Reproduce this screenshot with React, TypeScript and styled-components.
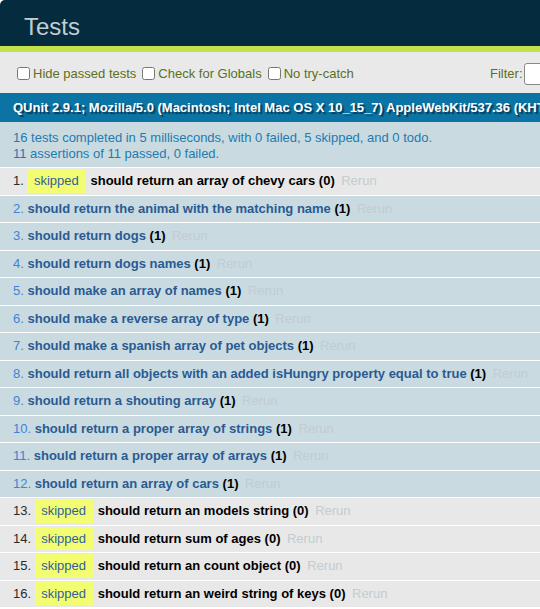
import styled, { createGlobalStyle } from "styled-components";

const GlobalStyle = createGlobalStyle`
  html, body {
    margin: 0;
    padding: 0;
    overflow: hidden;
    background: #ffffff;
  }
  body {
    font-family: "Liberation Sans", Arial, Helvetica, sans-serif;
  }
`;

const Page = styled.div`
  width: 800px;
`;

const Header = styled.h1`
  margin: 0;
  padding: 15px 0 7px 24px;
  color: #c2ccd1;
  background-color: #052c3e;
  font-size: 24px;
  line-height: 24px;
  font-weight: 400;
  border-radius: 5px 5px 0 0;
`;

const Banner = styled.div`
  height: 6px;
  background-color: #c3e14b;
`;

const Toolbar = styled.div`
  display: flex;
  align-items: center;
  box-sizing: border-box;
  height: 41px;
  padding: 7.5px 13px 5.5px;
  color: #5c7020;
  background-color: #e9e9e9;
  font-size: 13px;
`;

const Option = styled.label`
  display: inline-flex;
  align-items: center;
  margin-right: 2px;
  white-space: nowrap;
  input {
    margin: 3px 3px 3px 4px;
    width: 13px;
    height: 13px;
  }
`;

const FilterGroup = styled.div`
  display: flex;
  align-items: center;
  width: 297px;
  margin-left: auto;
  white-space: nowrap;
`;

const FilterInput = styled.input`
  box-sizing: border-box;
  width: 160px;
  height: 22px;
  margin-left: 1px;
  border: 1px solid #8a8a8a;
  border-radius: 3px;
  background: #ffffff;
`;

const UserAgent = styled.h2`
  margin: 0;
  padding: 6.5px 13px;
  background-color: #0b74a5;
  color: #ffffff;
  font-size: 13px;
  line-height: 16px;
  font-weight: 700;
  white-space: nowrap;
  text-shadow: rgba(0, 0, 0, 0.5) 2px 2px 1px;
`;

const TestResult = styled.p`
  margin: 0;
  padding: 8px 13px 5px;
  color: #1e7bb0;
  background-color: #c9dae1;
  border-bottom: 1px solid #ffffff;
  font-size: 13px;
  line-height: 16px;
  white-space: nowrap;
`;

const Tests = styled.ol`
  margin: 0;
  padding: 0;
  list-style-position: inside;
  font-size: 13px;
`;

const Test = styled.li<{ $skipped?: boolean }>`
  padding: 5.25px 13px;
  line-height: 16px;
  border-bottom: 1px solid #ffffff;
  white-space: nowrap;
  color: ${(p) => (p.$skipped ? "#2a2a2a" : "#4084d5")};
  background-color: ${(p) => (p.$skipped ? "#e8e8e8" : "#c9dae1")};
`;

const SkippedLabel = styled.em`
  display: inline-block;
  font-style: normal;
  background-color: #f3fd72;
  color: #31609a;
  line-height: 23.4px;
  padding: 0 6.5px;
  margin: -5.2px 5.2px -5.2px 0;
`;

const Name = styled.span<{ $skipped?: boolean }>`
  font-weight: 700;
  color: ${(p) => (p.$skipped ? "#000000" : "#2a5a92")};
`;

const Counts = styled.b`
  color: #000000;
`;

const Rerun = styled.a`
  padding: 0 6.5px;
  color: #c2ccd1;
  text-decoration: none;
`;

const tests = [
  { name: "should return an array of chevy cars", skipped: true },
  { name: "should return the animal with the matching name" },
  { name: "should return dogs" },
  { name: "should return dogs names" },
  { name: "should make an array of names" },
  { name: "should make a reverse array of type" },
  { name: "should make a spanish array of pet objects" },
  { name: "should return all objects with an added isHungry property equal to true" },
  { name: "should return a shouting array" },
  { name: "should return a proper array of strings" },
  { name: "should return a proper array of arrays" },
  { name: "should return an array of cars" },
  { name: "should return an models string", skipped: true },
  { name: "should return sum of ages", skipped: true },
  { name: "should return an count object", skipped: true },
  { name: "should return an weird string of keys", skipped: true },
];

export default function App() {
  return (
    <>
      <GlobalStyle />
      <Page>
        <Header>Tests</Header>
        <Banner />
        <Toolbar>
          <Option>
            <input type="checkbox" />
            Hide passed tests
          </Option>
          <Option>
            <input type="checkbox" />
            Check for Globals
          </Option>
          <Option>
            <input type="checkbox" />
            No try-catch
          </Option>
          <FilterGroup>
            Filter: <FilterInput type="text" />
          </FilterGroup>
        </Toolbar>
        <UserAgent>
          QUnit 2.9.1; Mozilla/5.0 (Macintosh; Intel Mac OS X 10_15_7) AppleWebKit/537.36 (KHTML, like
          Gecko) Chrome/87.0.4280.88 Safari/537.36
        </UserAgent>
        <TestResult>
          16 tests completed in 5 milliseconds, with 0 failed, 5 skipped, and 0 todo.
          <br />
          11 assertions of 11 passed, 0 failed.
        </TestResult>
        <Tests>
          {tests.map((t) => (
            <Test key={t.name} $skipped={t.skipped}>
              {t.skipped && <SkippedLabel>skipped</SkippedLabel>}
              <strong>
                <Name $skipped={t.skipped}>{t.name}</Name>{" "}
                <Counts>({t.skipped ? 0 : 1})</Counts>
              </strong>
              <Rerun href="#">Rerun</Rerun>
            </Test>
          ))}
        </Tests>
      </Page>
    </>
  );
}
